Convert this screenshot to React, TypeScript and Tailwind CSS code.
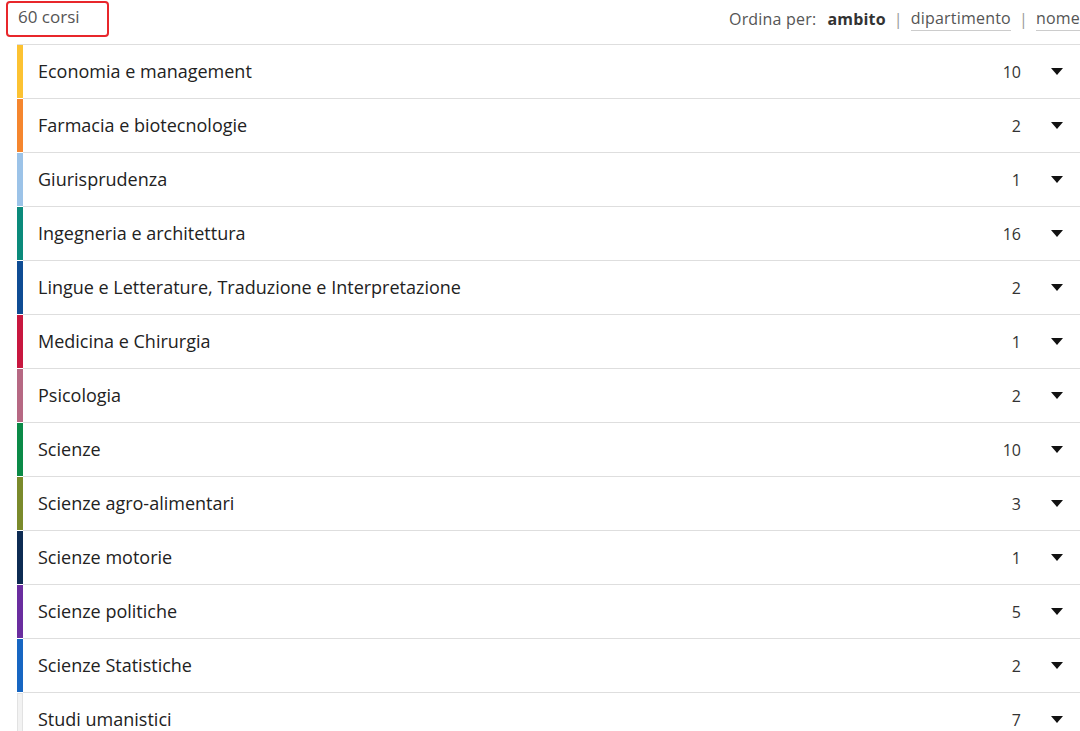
const ITEMS = [
  { name: 'Economia e management', count: 10, color: 'bg-[#fcc232]' },
  { name: 'Farmacia e biotecnologie', count: 2, color: 'bg-[#f5862f]' },
  { name: 'Giurisprudenza', count: 1, color: 'bg-[#9cc3e8]' },
  { name: 'Ingegneria e architettura', count: 16, color: 'bg-[#0b8a7b]' },
  { name: 'Lingue e Letterature, Traduzione e Interpretazione', count: 2, color: 'bg-[#0e4c94]' },
  { name: 'Medicina e Chirurgia', count: 1, color: 'bg-[#c8173f]' },
  { name: 'Psicologia', count: 2, color: 'bg-[#b66883]' },
  { name: 'Scienze', count: 10, color: 'bg-[#0b8a47]' },
  { name: 'Scienze agro-alimentari', count: 3, color: 'bg-[#7a8a2b]' },
  { name: 'Scienze motorie', count: 1, color: 'bg-[#0d2b53]' },
  { name: 'Scienze politiche', count: 5, color: 'bg-[#6a2d9f]' },
  { name: 'Scienze Statistiche', count: 2, color: 'bg-[#1766c2]' },
  { name: 'Studi umanistici', count: 7, color: 'bg-[#f2f2f2] border border-[#e2e2e2]' },
];

function Caret() {
  return (
    <svg width="12" height="7" viewBox="0 0 12 7" className="block">
      <path d="M0 0 H12 L6 7 Z" fill="#111" />
    </svg>
  );
}

export default function App() {
  return (
    <div className="h-[731px] w-full overflow-hidden bg-white font-['Open_Sans','Liberation_Sans',sans-serif]">
      <div className="w-[1080px]">
        <header className="flex h-[44px] items-start justify-between pl-[6px]">
          <div className="mt-px flex h-[36px] w-[103px] items-center rounded-[4px] border-2 border-[#e8262b] pb-[4px] pl-[10px] text-[17px] text-[#555]">
            60 corsi
          </div>
          <div className="mt-[7px] flex items-center text-[16px] tracking-[0.2px] text-[#555]">
            <span>Ordina per:</span>
            <span className="ml-[11px] font-bold text-[#333]">ambito</span>
            <span className="mx-[8px] text-[#999]">|</span>
            <span className="border-b border-[#ccc] leading-[23px]">dipartimento</span>
            <span className="mx-[8px] text-[#999]">|</span>
            <span className="border-b border-[#ccc] leading-[23px]">nome</span>
          </div>
        </header>
        <ul className="ml-[17px] w-[1063px] border-t border-[#dedede]">
          {ITEMS.map((item) => (
            <li key={item.name} className="flex h-[54px]">
              <div className={`mb-px w-[6px] shrink-0 ${item.color}`} />
              <div className="flex flex-1 items-center border-b border-[#dedede] pl-[15px] pr-[17px]">
                <span className="flex-1 text-[18px] text-[#222]">{item.name}</span>
                <span className="text-[16px] text-[#333]">{item.count}</span>
                <span className="ml-[30px]">
                  <Caret />
                </span>
              </div>
            </li>
          ))}
        </ul>
      </div>
    </div>
  );
}
